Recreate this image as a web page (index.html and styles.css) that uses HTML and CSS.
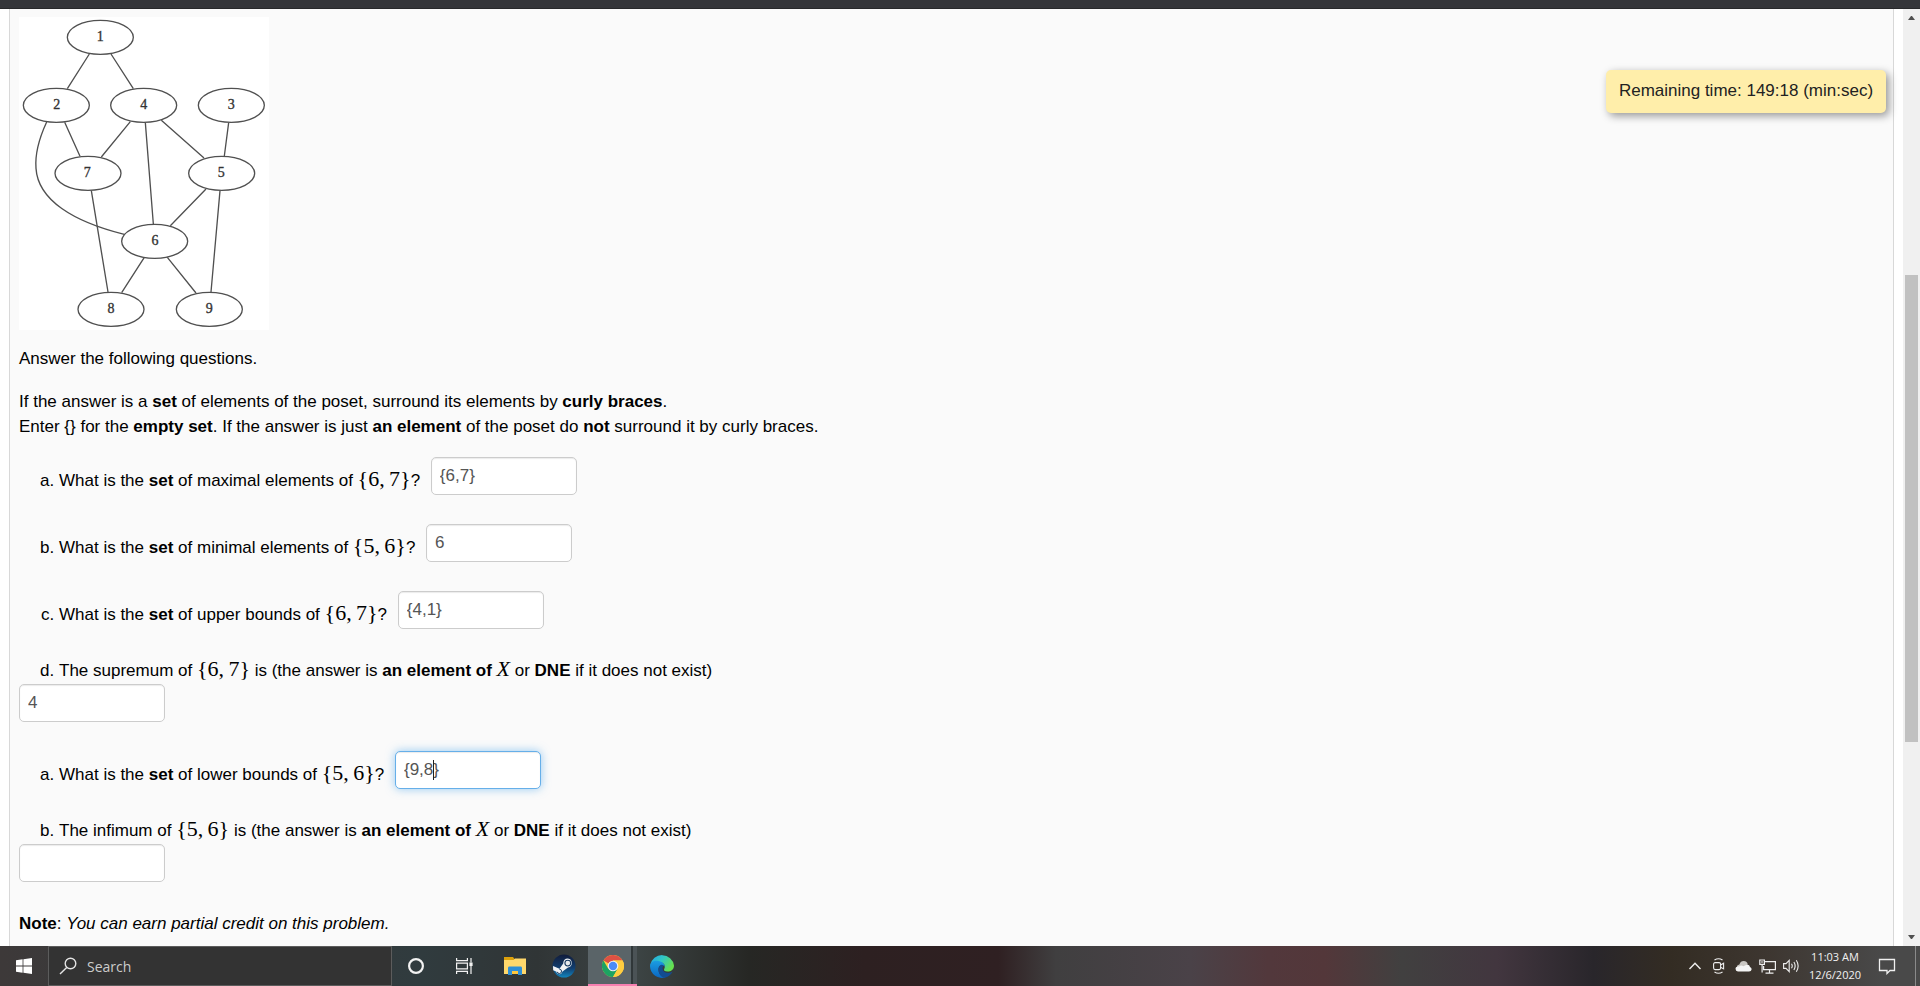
FILE: index.html
```html
<!DOCTYPE html>
<html lang="en">
<head>
    <meta charset="UTF-8">
    <meta name="viewport" content="width=device-width, initial-scale=1.0">
    <title>Posets</title>
    <link rel="stylesheet" href="styles.css">
</head>
<body>

    <div class="browser-edge"></div>

    <div class="viewport">
        <main class="problem">
            <!-- Hasse diagram -->
            <svg class="diagram" viewBox="57 51 750 939" role="img" aria-label="Hasse diagram of the poset X">
                <g class="edges">
                    <path d="M268 162L202 266M333 162L400 266M194 367L240 469M391 365L304 471M436 368L460 672M484 361L612 474M686 368L673 468M618 567L511 677M274 572L324 876M660 572L633 876M433 772L365 878M502 772L588 879"/>
                    <path d="M140 366C122 405 104 455 108 505C114 600 220 665 373 703"/>
                </g>
                <g class="nodes">
                    <ellipse cx="301" cy="112" rx="99" ry="51"/>
                    <ellipse cx="169" cy="316" rx="99" ry="51"/>
                    <ellipse cx="431" cy="316" rx="99" ry="51"/>
                    <ellipse cx="694" cy="316" rx="99" ry="51"/>
                    <ellipse cx="264" cy="520" rx="99" ry="51"/>
                    <ellipse cx="665" cy="520" rx="99" ry="51"/>
                    <ellipse cx="464" cy="724" rx="99" ry="51"/>
                    <ellipse cx="333" cy="928" rx="99" ry="51"/>
                    <ellipse cx="628" cy="928" rx="99" ry="51"/>
                </g>
                <g class="names">
                    <text x="301" y="122">1</text>
                    <text x="170" y="326">2</text>
                    <text x="431" y="326">4</text>
                    <text x="694" y="326">3</text>
                    <text x="262" y="530">7</text>
                    <text x="664" y="530">5</text>
                    <text x="465" y="734">6</text>
                    <text x="333" y="938">8</text>
                    <text x="628" y="938">9</text>
                </g>
            </svg>

            <p>Answer the following questions.</p>
            <p>If the answer is a <b>set</b> of elements of the poset, surround its elements by <b>curly braces</b>.<br>
            Enter {} for the <b>empty set</b>. If the answer is just <b>an element</b> of the poset do <b>not</b> surround it by curly braces.</p>

            <ol>
                <li><label for="ans1">What is the <b>set</b> of maximal elements of <span class="math">{6,&thinsp;7}</span>?</label> <input class="answer" id="ans1" type="text" value="{6,7}"></li>
                <li><label for="ans2">What is the <b>set</b> of minimal elements of <span class="math">{5,&thinsp;6}</span>?</label> <input class="answer" id="ans2" type="text" value="6"></li>
                <li><label for="ans3">What is the <b>set</b> of upper bounds of <span class="math">{6,&thinsp;7}</span>?</label> <input class="answer" id="ans3" type="text" value="{4,1}"></li>
                <li><label for="ans4">The supremum of <span class="math">{6,&thinsp;7}</span> is (the answer is <b>an element of</b> <i class="math">X</i> or <b>DNE</b> if it does not exist)</label></li>
            </ol>
            <div class="answer-row"><input class="answer" id="ans4" type="text" value="4"></div>

            <ol>
                <li><label for="ans5">What is the <b>set</b> of lower bounds of <span class="math">{5,&thinsp;6}</span>?</label> <span class="active-field"><input class="answer active" id="ans5" type="text" value="{9,8}"><span class="caret"></span></span></li>
                <li><label for="ans6">The infimum of <span class="math">{5,&thinsp;6}</span> is (the answer is <b>an element of</b> <i class="math">X</i> or <b>DNE</b> if it does not exist)</label></li>
            </ol>
            <div class="answer-row"><input class="answer" id="ans6" type="text"></div>

            <p><b>Note</b>: <em>You can earn partial credit on this problem.</em></p>
        </main>

        <div class="timer">Remaining time: 149:18 (min:sec)</div>

        <div class="scrollbar">
            <svg width="7" height="4" viewBox="0 0 7 4"><path d="M0 4L3 0H4L7 4Z"/></svg>
            <div class="track"><div class="thumb"></div></div>
            <svg width="7" height="4" viewBox="0 0 7 4"><path d="M0 0L3 4H4L7 0Z"/></svg>
        </div>
    </div>

    <footer class="taskbar">
        <button class="start" aria-label="Start">
            <svg width="16" height="16" viewBox="0 0 16 16" fill="#fff"><path d="M0 2.2L6.6 1.3V7.6H0ZM7.4 1.2L16 0V7.6H7.4ZM0 8.4H6.6V14.7L0 13.8ZM7.4 8.4H16V16L7.4 14.8Z"/></svg>
        </button>
        <div class="search">
            <svg width="18" height="18" viewBox="0 0 18 18" fill="none" stroke="#e4e4e4" stroke-width="1.4"><circle cx="11.5" cy="6.5" r="5.3"/><path d="M7.7 10.4L1 17"/></svg>
            <input type="text" placeholder="Search" aria-label="Search">
        </div>
        <div class="shell">
            <button aria-label="Cortana">
                <svg width="18" height="18" viewBox="0 0 18 18"><circle cx="9" cy="9" r="6.9" fill="none" stroke="#f2f2f2" stroke-width="2.2"/></svg>
            </button>
            <button aria-label="Task View">
                <svg width="17" height="16" viewBox="0 0 17 16" fill="none" stroke="#f2f2f2" stroke-width="1.2"><path d="M.6 0V2.6H11.4V0M.6 16V13.4H11.4V16M.6 5.2H11.4V10.8H.6ZM15 0V4.5M15 8V16"/><path d="M13.4 4.5H16.6V8H13.4Z" fill="#f2f2f2" stroke="none"/></svg>
            </button>
        </div>
        <div class="apps">
            <button aria-label="File Explorer">
                <svg width="22" height="20" viewBox="0 0 22 20"><path d="M0 1H9L10.5 3H22V18H0Z" fill="#dca10c"/><path d="M0 4H9.5L11 2.5H22V18H0Z" fill="#ffd86b"/><path d="M4 19V12Q4 10.6 5.4 10.6H16.6Q18 10.6 18 12V19H14V15H8V19Z" fill="#2f8fd5"/><path d="M8 15H14V18H8Z" fill="#ffc83d"/></svg>
            </button>
            <button aria-label="Steam">
                <svg width="24" height="24" viewBox="0 0 24 24">
                    <defs><linearGradient id="steam" x1="0" y1="0" x2="0" y2="1"><stop offset="0" stop-color="#111c3b"/><stop offset=".6" stop-color="#123f70"/><stop offset="1" stop-color="#1285bd"/></linearGradient></defs>
                    <circle cx="12" cy="12" r="11.5" fill="url(#steam)"/>
                    <path d="M1 12L7.5 14.8L11.2 9.5Q11.5 4.6 15.8 4.6A4.5 4.5 0 0 1 16 13.5L10.5 17.5Q9.7 20.3 7 20.2Q4.6 19.9 4 17.5L1.2 16.2Z" fill="#f1f3f5"/>
                    <circle cx="15.8" cy="9.1" r="2.9" fill="#e6e9ec" stroke="#183b62" stroke-width="1.1"/>
                    <path d="M5.2 17.8A2.2 2.2 0 1 0 7.3 15.1" fill="none" stroke="#183b62" stroke-width="1"/>
                </svg>
            </button>
            <button class="running" aria-label="Google Chrome">
                <svg width="22" height="22" viewBox="0 0 22 22">
                    <circle cx="11" cy="11" r="11" fill="#ffcd40"/>
                    <path d="M11 11L1.47 5.5A11 11 0 0 1 20.53 5.5H11Z" fill="#dd5144"/>
                    <path d="M1.47 5.5A11 11 0 0 0 11 22L15.76 13.75L11 11L6.24 13.75Z" fill="#1da362"/>
                    <path d="M11 5.5H20.53A11 11 0 0 1 11 22L15.76 13.75Z" fill="#ffcd40"/>
                    <circle cx="11" cy="11" r="5.3" fill="#f1f1f1"/><circle cx="11" cy="11" r="4.2" fill="#4c8bf5"/>
                </svg>
            </button>
            <button aria-label="Microsoft Edge">
                <svg width="24" height="24" viewBox="0 0 24 24">
                    <defs>
                        <linearGradient id="edge1" x1="0" y1="0" x2="1" y2=".5"><stop offset="0" stop-color="#22a7e8"/><stop offset=".5" stop-color="#31c7c5"/><stop offset="1" stop-color="#66e04f"/></linearGradient>
                        <linearGradient id="edge2" x1="0" y1="0" x2="0" y2="1"><stop offset="0" stop-color="#1b9de2"/><stop offset="1" stop-color="#0b67c2"/></linearGradient>
                    </defs>
                    <path d="M.3 11A12 12 0 0 1 24 11.5C24 15.5 21 17.5 17.5 17.5C14.5 17.5 13.4 16.2 14.2 15C16 12 14 8.5 10 8C6 7.5 2 9 .3 11Z" fill="url(#edge1)"/>
                    <path d="M0 12C0 8.5 3.5 6.5 7.2 6.7C12 7 15 10 14.8 13C14 10.5 9.5 10.2 8.6 14C7.5 19 12 24 16 23.2A12 12 0 0 1 0 12Z" fill="url(#edge2)"/>
                    <path d="M8.8 13.5C9.5 10.5 12.3 10.3 13.7 11.5C12 13 12 16.5 15 18.2C18 19.6 21 18.7 22.6 17.5C20.5 21.5 17 23.8 13.6 23.7C9.5 22 7.8 17.5 8.8 13.5Z" fill="#134c92"/>
                </svg>
            </button>
        </div>

        <div class="tray">
            <button aria-label="Show hidden icons">
                <svg width="14" height="14" viewBox="0 0 14 14"><path d="M1.5 10L7 4.2L12.5 10" fill="none" stroke="#eee" stroke-width="1.4"/></svg>
            </button>
            <button aria-label="Meet Now">
                <svg width="14" height="16" viewBox="0 0 14 16" fill="none" stroke="#eee" stroke-width="1.1"><rect x="1.6" y="4.6" width="7" height="7" rx="1.5"/><path d="M8.6 7L11.6 5.3V10.9L8.6 9.2M2.5 2Q6.5-.6 10.5 2M2.5 14Q6.5 16.6 10.5 14"/></svg>
            </button>
            <button aria-label="OneDrive">
                <svg width="17" height="12" viewBox="0 0 17 12"><path d="M2 7.5Q1.5 5 4.4 4.4Q5.5 1 8.7 1Q11.8 1 12.8 4.2L9 8Z" fill="#c9c6c2"/><path d="M3 11.5Q.5 11.2.5 8.8Q.7 6.2 4 6.4Q6 4.6 8.4 6.2L11 5Q14.3 3.8 15 7Q16.8 7.6 16.6 9.5Q16.3 11.5 14 11.5Z" fill="#f4f4f4"/></svg>
            </button>
            <button aria-label="Network">
                <svg width="17" height="15" viewBox="0 0 17 15" fill="none" stroke="#eee" stroke-width="1.2"><path d="M6 2.6H16.4V10.6H4.6V7M10.5 10.6V14M6.5 14.2H14.5M.8 1H5.4V5.4H.8ZM3.1 5.4V13.6M2 3H4.2"/></svg>
            </button>
            <button aria-label="Volume">
                <svg width="17" height="14" viewBox="0 0 17 14" fill="none" stroke="#eee" stroke-width="1.1"><path d="M.6 4.6H3L6.2 1.4V12.6L3 9.4H.6ZM8.5 4.8Q10 7 8.5 9.2M10.9 3Q13.4 7 10.9 11M13.3 1.2Q17 7 13.3 12.8"/></svg>
            </button>
        </div>
        <div class="clock">
            <span>11:03 AM</span>
            <span>12/6/2020</span>
        </div>
        <button class="notifications" aria-label="Notifications">
            <svg width="18" height="18" viewBox="0 0 18 18"><path d="M1.5 2.5H16.5V13.5H12L9 16.5V13.5H1.5Z" fill="none" stroke="#f0f0f0" stroke-width="1.3"/></svg>
        </button>
        <div class="show-desktop"></div>
    </footer>

</body>
</html>
```
FILE: styles.css
```css
* {
    box-sizing: border-box;
}

body {
    margin: 0;
    height: 100vh;
    display: flex;
    flex-direction: column;
    overflow: hidden;
    background: #fff;
    color: #000;
    font-family: "Liberation Sans", Arial, sans-serif;
    font-size: 17px;
    line-height: 25px;
}

.browser-edge {
    flex: none;
    height: 9px;
    background: #35363a;
    border-bottom: 1px solid #28292b;
}

.viewport {
    flex: 1;
    min-height: 0;
    display: flex;
    position: relative;
    padding-left: 9px;
}

/* Problem */
.problem {
    flex: 1;
    overflow: hidden;
    padding: 8px 9px;
    background: #fafafa;
    border: solid #d8d8d8;
    border-width: 0 1px;
}

.diagram {
    display: block;
    width: 250px;
    height: 313px;
    margin-bottom: 16px;
    background: #fff;
}
.edges, .nodes {
    fill: none;
    stroke: #505050;
    stroke-width: 4;
}
.names {
    font-family: "Liberation Serif", serif;
    font-size: 42px;
    fill: #333;
    stroke: #333;
    stroke-width: 1;
    text-anchor: middle;
}

p {
    margin: 0 0 18px;
}

ol {
    margin: 0;
    padding-left: 40px;
    list-style: lower-alpha;
}
li {
    line-height: 26px;
    margin-bottom: 17px;
}
li:last-child {
    margin-bottom: 0;
}

.math {
    font-family: "Liberation Serif", serif;
    font-size: 22px;
    line-height: 1;
}

.answer {
    width: 146px;
    height: 38px;
    margin: 0 0 12px;
    padding: 5px 8px;
    vertical-align: middle;
    font: inherit;
    color: #555;
    background: #fff;
    border: 1px solid #ccc;
    border-radius: 5px;
    box-shadow: inset 0 1px 1px rgba(0, 0, 0, 0.08);
    outline: none;
}
li .answer {
    margin-left: 6px;
}
.answer.active,
.answer:focus {
    border-color: #66afe9;
    box-shadow: inset 0 1px 1px rgba(0, 0, 0, 0.08), 0 0 10px rgba(82, 168, 236, 0.6);
}
.answer-row {
    display: flex;
    margin-bottom: 17px;
}

.active-field {
    position: relative;
}
.caret {
    position: absolute;
    left: 44px;
    top: -5px;
    width: 1px;
    height: 20px;
    background: #222;
}

.timer {
    position: absolute;
    top: 61px;
    right: 34px;
    width: 280px;
    padding: 8px 0 10px;
    text-align: center;
    color: #222;
    background: #fea;
    border-radius: 5px;
    box-shadow: 3px 3px 8px rgba(0, 0, 0, 0.4);
}

.scrollbar {
    flex: none;
    width: 17px;
    margin-left: 9px;
    padding: 7px 0;
    display: flex;
    flex-direction: column;
    align-items: center;
    background: #f0f0f0;
    fill: #505050;
}
.track {
    flex: 1;
    padding: 255px 0 193px;
    display: flex;
}
.thumb {
    width: 13px;
    background: #c1c1c1;
}

/* Taskbar */
.taskbar {
    flex: none;
    height: 40px;
    display: flex;
    color: #f2f2f2;
    font-family: "Open Sans", "Noto Sans", sans-serif;
    background: linear-gradient(90deg, #3d3939 0%, #303b3e 22%, #303536 28%, #3d4545 33%, #262724 39%, #2d2021 45%, #2f2022 52%, #403f40 55%, #4a4248 62%, #52383c 66%, #53373a 69%, #414040 73%, #42363f 78%, #29262b 83%, #332c23 87%, #3d3630 92%, #494949 98%);
}
.taskbar button {
    display: flex;
    align-items: center;
    justify-content: center;
    padding: 0;
    border: 0;
    background: none;
}
.taskbar .start {
    width: 48px;
}

.search {
    width: 344px;
    display: flex;
    align-items: center;
    gap: 10px;
    padding-left: 10px;
    background: #333;
    border: 1px solid #5c5c5c;
}
.search input {
    flex: 1;
    min-width: 0;
    padding: 0;
    border: 0;
    outline: none;
    background: none;
    color: #fff;
    font: 14px "Open Sans", "Noto Sans", sans-serif;
}
.search input::placeholder {
    color: #ccc;
}

.shell, .apps, .tray {
    display: flex;
}
.shell button {
    width: 48px;
}
.apps {
    margin-left: 2px;
}
.apps button {
    width: 49px;
}
.taskbar .running {
    background: linear-gradient(90deg, #5a6468 43px, #303739 43px, #303739 45px, #4b5356 45px);
    border-bottom: 2px solid #f77fb0;
    padding-top: 2px;
}

.tray {
    margin-left: auto;
}
.tray button {
    width: 24px;
}
.clock {
    width: 64px;
    display: flex;
    flex-direction: column;
    align-items: center;
    justify-content: center;
    font-size: 11px;
    line-height: 18px;
}
.taskbar .notifications {
    width: 40px;
}
.show-desktop {
    width: 5px;
    margin-left: 8px;
    border-left: 1px solid #8a8a8a;
}
```
